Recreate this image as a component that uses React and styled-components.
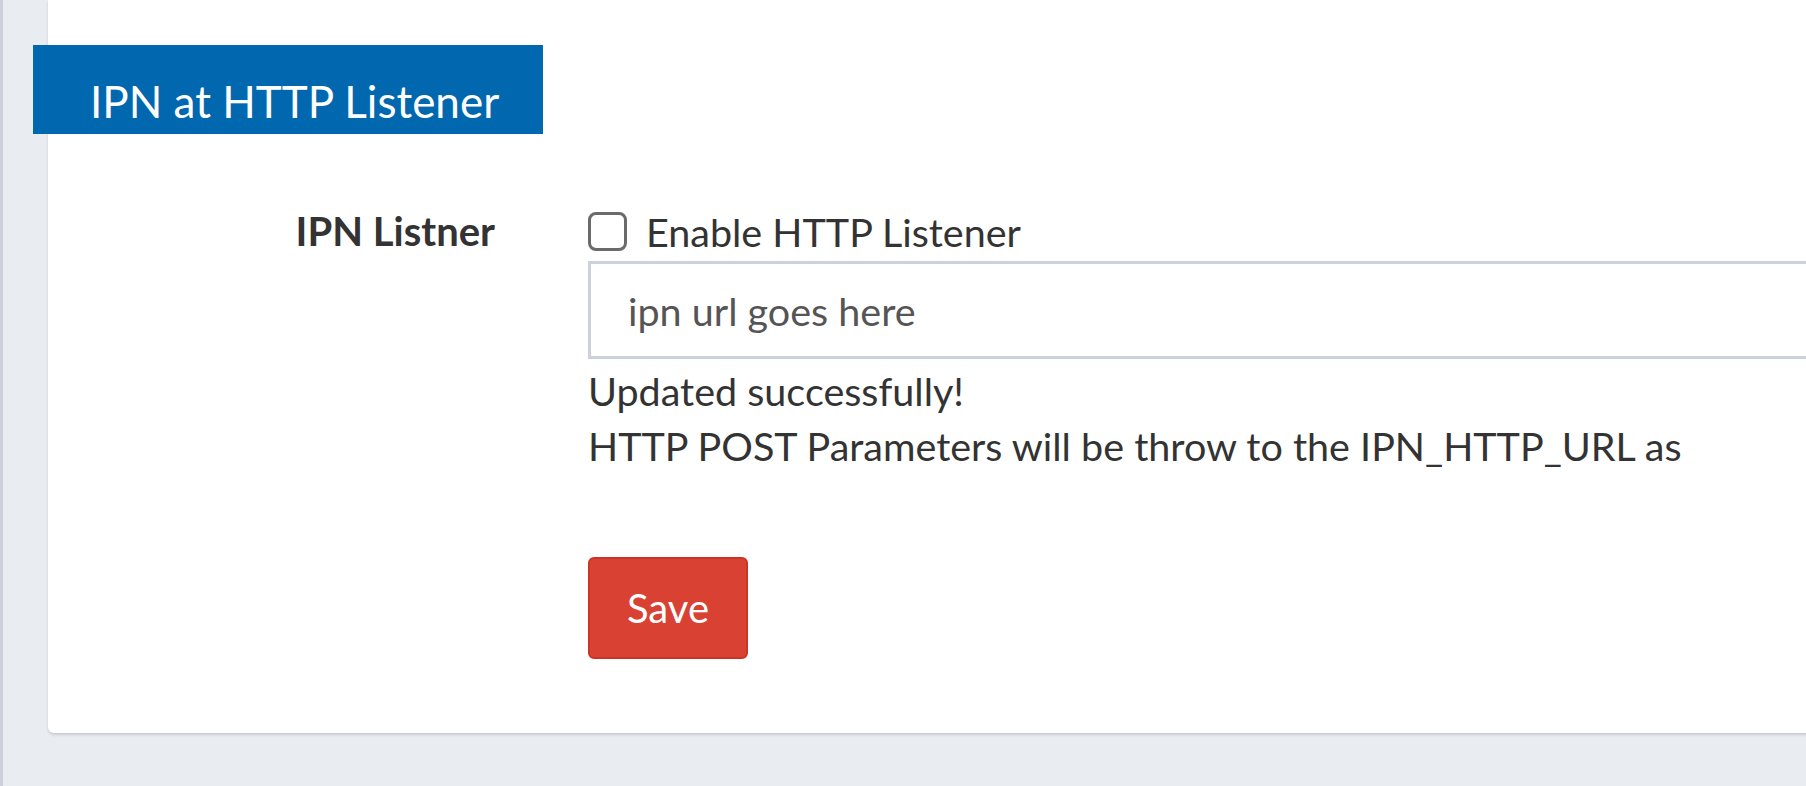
import React from 'react';
import styled, { createGlobalStyle } from 'styled-components';

const GlobalStyle = createGlobalStyle`
  html, body {
    margin: 0;
    padding: 0;
    background: #e9edf1;
    overflow: hidden;
  }
  * {
    box-sizing: border-box;
  }
`;

const Page = styled.div`
  width: 1806px;
  height: 786px;
  border-left: 3px solid #ccd0da;
  padding-left: 45px;
  font-family: "Lato", "Open Sans", sans-serif;
  color: #333;
  overflow: hidden;
`;

const Card = styled.div`
  background: #fff;
  margin-right: -40px;
  padding: 45px 0 74px;
  border-radius: 0 0 6px 6px;
  box-shadow: 0 2px 3px rgba(0, 0, 0, 0.14);
`;

const CardTitle = styled.h3`
  margin: 0 0 70px -15px;
  width: 510px;
  height: 89px;
  padding: 20px 0 0 57px;
  background: #0168b0;
  color: #fff;
  font-weight: 400;
  font-size: 44px;
  line-height: 72px;
`;

const FormRow = styled.div`
  display: grid;
  grid-template-columns: 447px 1fr;
  column-gap: 93px;
  align-items: start;
`;

const Label = styled.label`
  text-align: right;
  font-weight: 700;
  font-size: 40px;
  line-height: 54px;
`;

const Field = styled.div`
  display: flex;
  flex-direction: column;
  align-items: flex-start;
`;

const CheckRow = styled.label`
  display: flex;
  align-items: center;
  gap: 19px;
  height: 54px;
  font-size: 39.5px;
`;

const Checkbox = styled.input.attrs({ type: 'checkbox' })`
  appearance: none;
  margin: 0;
  width: 39px;
  height: 39px;
  border: 3px solid #6a6a6a;
  border-radius: 8px;
  background: #fff;
`;

const UrlInput = styled.input`
  margin-top: 3px;
  width: 100%;
  height: 98px;
  border: 3px solid #ccd1db;
  border-radius: 0;
  padding: 0 0 0 37px;
  font-family: inherit;
  font-size: 39.5px;
  color: #555;
  outline: none;
  &::placeholder {
    color: #555;
  }
`;

const HelpText = styled.div`
  font-size: 39.5px;
  line-height: 54px;
  margin-top: ${p => (p.$first ? '5px' : '1px')};
`;

const SaveButton = styled.button`
  margin-top: 84px;
  width: 160px;
  height: 102px;
  background: #d94133;
  border: 2px solid #cd3326;
  border-radius: 6px;
  color: #fff;
  font-family: inherit;
  font-size: 40px;
  cursor: pointer;
`;

export default function App() {
  return (
    <>
      <GlobalStyle />
      <Page>
        <Card>
          <CardTitle>IPN at HTTP Listener</CardTitle>
          <FormRow>
            <Label>IPN Listner</Label>
            <Field>
              <CheckRow>
                <Checkbox />
                Enable HTTP Listener
              </CheckRow>
              <UrlInput placeholder="ipn url goes here" />
              <HelpText $first>Updated successfully!</HelpText>
              <HelpText>HTTP POST Parameters will be throw to the IPN_HTTP_URL as</HelpText>
              <SaveButton>Save</SaveButton>
            </Field>
          </FormRow>
        </Card>
      </Page>
    </>
  );
}
